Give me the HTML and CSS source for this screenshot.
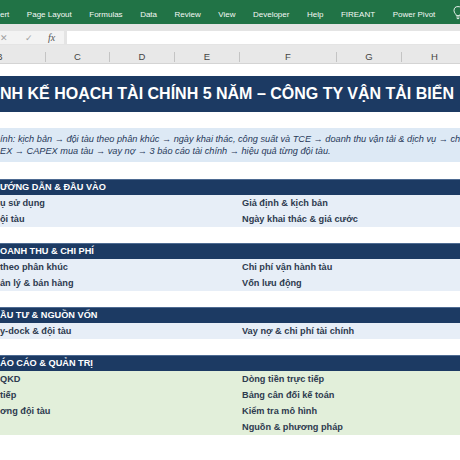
FILE: index.html
```html
<!DOCTYPE html>
<html lang="vi">
<head>
    <meta charset="UTF-8">
    <meta name="viewport" content="width=device-width, initial-scale=1.0">
    <title>Mô hình kế hoạch tài chính 5 năm</title>
    <link rel="stylesheet" href="styles.css">
</head>
<body>

    <!-- thanh ribbon -->
    <div class="ribbon">
        <span class="tab">ert</span>
        <span class="tab">Page Layout</span>
        <span class="tab">Formulas</span>
        <span class="tab">Data</span>
        <span class="tab">Review</span>
        <span class="tab">View</span>
        <span class="tab">Developer</span>
        <span class="tab">Help</span>
        <span class="tab">FIREANT</span>
        <span class="tab">Power Pivot</span>
        <svg class="bulb" width="10" height="14" viewBox="0 0 10 14">
            <path d="M3.3 9.6 C3.3 8.2 1 7 1 4.6 A4 4 0 0 1 9 4.6 C9 7 6.7 8.2 6.7 9.6 Z" fill="none" stroke="#fff" stroke-width="0.9"/>
            <path d="M3.4 11 H6.6 M3.8 12.6 H6.2" stroke="#fff" stroke-width="0.9"/>
        </svg>
    </div>

    <!-- thanh công thức -->
    <div class="formula-bar">
        <div class="fx-tools">
            <span class="fx-btn fx-cancel">✕</span>
            <span class="fx-btn fx-enter">✓</span>
            <span class="fx-label">fx</span>
        </div>
        <div class="fx-input"></div>
    </div>

    <div class="col-heads">
        <div class="col col-b">B</div>
        <div class="col col-c">C</div>
        <div class="col col-d">D</div>
        <div class="col col-e">E</div>
        <div class="col col-f">F</div>
        <div class="col col-g">G</div>
        <div class="col col-h">H</div>
    </div>

    <div class="sheet">
        <div class="title">NH KẾ HOẠCH TÀI CHÍNH 5 NĂM – CÔNG TY VẬN TẢI BIỂN</div>

        <div class="note">
            <div class="note-line">ính: kịch bản → đội tàu theo phân khúc → ngày khai thác, công suất và TCE → doanh thu vận tải &amp; dịch vụ → chi phí</div>
            <div class="note-line">EX → CAPEX mua tàu → vay nợ → 3 báo cáo tài chính → hiệu quả từng đội tàu.</div>
        </div>

        <div class="group">
            <div class="group-head">ƯỚNG DẪN &amp; ĐẦU VÀO</div>
            <div class="row"><span class="cell-left">ụ sử dụng</span><span class="cell-right">Giả định &amp; kịch bản</span></div>
            <div class="row"><span class="cell-left">ội tàu</span><span class="cell-right">Ngày khai thác &amp; giá cước</span></div>
        </div>

        <div class="group">
            <div class="group-head">OANH THU &amp; CHI PHÍ</div>
            <div class="row"><span class="cell-left">theo phân khúc</span><span class="cell-right">Chi phí vận hành tàu</span></div>
            <div class="row"><span class="cell-left">ản lý &amp; bán hàng</span><span class="cell-right">Vốn lưu động</span></div>
        </div>

        <div class="group">
            <div class="group-head">ẦU TƯ &amp; NGUỒN VỐN</div>
            <div class="row"><span class="cell-left">y-dock &amp; đội tàu</span><span class="cell-right">Vay nợ &amp; chi phí tài chính</span></div>
        </div>

        <div class="group group-green">
            <div class="group-head">ÁO CÁO &amp; QUẢN TRỊ</div>
            <div class="row"><span class="cell-left">QKD</span><span class="cell-right">Dòng tiền trực tiếp</span></div>
            <div class="row"><span class="cell-left">tiếp</span><span class="cell-right">Bảng cân đối kế toán</span></div>
            <div class="row"><span class="cell-left">ơng đội tàu</span><span class="cell-right">Kiểm tra mô hình</span></div>
            <div class="row"><span class="cell-left"></span><span class="cell-right">Nguồn &amp; phương pháp</span></div>
        </div>
    </div>

</body>
</html>
```

FILE: styles.css
```css
body {
    margin: 0;
    width: 460px;
    height: 460px;
    overflow: hidden;
    background: #fff;
    font-family: "Liberation Sans", Arial, sans-serif;
}

/* ribbon */
.ribbon {
    display: flex;
    align-items: center;
    gap: 17.5px;
    height: 24px;
    box-sizing: border-box;
    padding-top: 4px;
    background-color: #217346;
    color: #f4f8f5;
    font-size: 8px;
    white-space: nowrap;
}
.bulb {
    flex: none;
    margin-top: -2px;
}

/* thanh công thức */
.formula-bar {
    display: flex;
    height: 21px;
    box-sizing: border-box;
    padding: 7px 0 1px;
    background-color: #e4e4e4;
}
.fx-tools {
    display: flex;
    align-items: center;
    width: 64px;
    margin-right: 3px;
    background-color: #f3f3f3;
}
.fx-btn {
    width: 8px;
    text-align: center;
    color: #a0a0a0;
    font-size: 9px;
}
.fx-enter {
    margin-left: 17px;
}
.fx-label {
    margin-left: 15px;
    color: #555;
    font-family: "Liberation Serif", serif;
    font-style: italic;
    font-size: 10px;
}
.fx-input {
    flex: 1;
    background-color: #fff;
}

/* tiêu đề cột */
.col-heads {
    display: flex;
    align-items: flex-end;
    height: 19px;
    box-sizing: border-box;
    padding-bottom: 1px;
    background-color: #e8e8e8;
    border-bottom: 1px solid #d4d4d4;
    color: #444;
    font-size: 9.5px;
    white-space: nowrap;
}
.col {
    flex: none;
    height: 10px;
    line-height: 10px;
    text-align: center;
    border-right: 1px solid #c4c4c4;
    box-sizing: border-box;
}
.col-b { width: 92px; margin-left: -46px; }
.col-c { width: 64px; }
.col-d { width: 65px; }
.col-e { width: 65px; }
.col-f { width: 97px; }
.col-g { width: 65px; }
.col-h { width: 65px; border-right: none; }

/* bảng tính */
.sheet {
    padding-top: 12px;
}
.title {
    height: 36px;
    line-height: 36px;
    background-color: #1c3a63;
    color: #fff;
    font-size: 16px;
    font-weight: bold;
    white-space: nowrap;
    overflow: hidden;
}
.note {
    margin-top: 16px;
    height: 34px;
    box-sizing: border-box;
    padding-top: 6px;
    background-color: #dde9f5;
    color: #28395a;
    font-size: 9.2px;
    font-style: italic;
    line-height: 11.5px;
}
.note-line {
    white-space: nowrap;
    overflow: hidden;
}
.group {
    margin-top: 17px;
    background-color: #e7eef7;
}
.group + .group {
    margin-top: 16px;
}
.group-green {
    background-color: #e2efda;
}
.group-head {
    height: 16px;
    line-height: 16px;
    background-color: #1c3a63;
    box-shadow: inset 0 1px 0 #4e6b92;
    color: #fff;
    font-size: 9.2px;
    font-weight: bold;
    white-space: nowrap;
}
.row {
    display: grid;
    grid-template-columns: 240px 1fr;
    height: 16px;
    line-height: 16px;
    color: #2e3b4f;
    font-size: 9.2px;
    font-weight: bold;
    white-space: nowrap;
}
.cell-right {
    padding-left: 2px;
}
```
